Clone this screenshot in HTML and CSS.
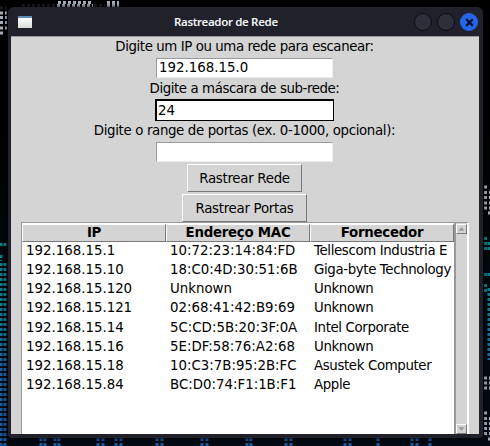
FILE: index.html
```html
<!DOCTYPE html>
<html lang="pt-BR">
<head>
<meta charset="utf-8">
<title>Rastreador de Rede</title>
<link rel="stylesheet" href="styles.css">
</head>
<body>
<svg class="wallpaper" viewBox="0 0 490 446" aria-hidden="true">
  <defs>
    <linearGradient id="tone" x1="0" y1="0" x2="0" y2="446" gradientUnits="userSpaceOnUse">
      <stop offset="0.45" stop-color="#087f80"/><stop offset="0.68" stop-color="#087b8e"/><stop offset="0.83" stop-color="#1464a5"/><stop offset="1" stop-color="#1557a0"/>
    </linearGradient>
    <linearGradient id="night" x1="0" y1="0" x2="0" y2="1">
      <stop offset="0.3" stop-color="#000"/><stop offset="0.6" stop-color="#01090c"/><stop offset="1" stop-color="#020913"/>
    </linearGradient>
  </defs>
  <rect width="490" height="446" fill="url(#night)"/>
  <g class="dots white">
    <path d="M58 2.500H92M57 5.500H93M107 2.500H119M107 5.500H119M0 13H7M0 17.500H7M0 22.500H7M0 28H7M0 33H5"/>
    <path d="M484 187H487M484 192.500H490M484 197.500H490M484 203H490M484 208H490M488 213H490M484 378H490M484 383H490M484 388H490M484 413H487M484 418.500H490M484 423.500H490M484 428.500H490M484 433.500H490M488 439H490"/>
  </g>
  <path class="dots dim" d="M22 5.500H55M0 8H7M94 5.500H105"/>
  <g class="dots" stroke="url(#tone)">
    <path d="M1 243V247M5 243V247M1 255V261M1 263V446M5 263V446"/>
    <path d="M485.500 237V252M489 242V250M485.500 273V276M489 273V276M485.500 284V292M489 288V360"/>
    <path d="M41 438V446M45 438V446M55 438V446M59 438V446M98 438V446M103 438V446M116 438V446M121 438V446M157 438V446M162 438V446M202 438V446M207 438V446M247 438V446M251 438V446M286 438V446M291 438V446M345 438V446M350 438V446M378 438V446M412 438V446M417 438V446M430 438V446"/>
  </g>
</svg>
<main class="window">
  <header class="titlebar">
    <span class="app-icon"></span>
    <h1>Rastreador de Rede</h1>
    <div class="controls"><i></i><i></i><i class="close"><svg viewBox="0 0 8 8"><path d="M1 1L7 7M7 1L1 7"/></svg></i></div>
  </header>
  <section class="client">
    <form class="form">
      <label for="ip">Digite um IP ou uma rede para escanear:</label>
      <div class="field" id="ip">192.168.15.0</div>
      <label for="mask">Digite a máscara de sub-rede:</label>
      <div class="field focused" id="mask">24</div>
      <label for="ports" class="wide">Digite o range de portas (ex. 0-1000, opcional):</label>
      <div class="field" id="ports"></div>
      <button type="button" class="net">Rastrear Rede</button>
      <button type="button" class="ports">Rastrear Portas</button>
    </form>
    <div class="tree">
      <div class="table">
        <div class="row head"><b>IP</b><b>Endereço MAC</b><b>Fornecedor</b></div>
        <div class="row"><span>192.168.15.1</span><span>10:72:23:14:84:FD</span><span>Tellescom Industria E</span></div>
        <div class="row"><span>192.168.15.10</span><span>18:C0:4D:30:51:6B</span><span>Giga-byte Technology</span></div>
        <div class="row"><span>192.168.15.120</span><span>Unknown</span><span>Unknown</span></div>
        <div class="row"><span>192.168.15.121</span><span>02:68:41:42:B9:69</span><span>Unknown</span></div>
        <div class="row"><span>192.168.15.14</span><span>5C:CD:5B:20:3F:0A</span><span>Intel Corporate</span></div>
        <div class="row"><span>192.168.15.16</span><span>5E:DF:58:76:A2:68</span><span>Unknown</span></div>
        <div class="row"><span>192.168.15.18</span><span>10:C3:7B:95:2B:FC</span><span>Asustek Computer</span></div>
        <div class="row"><span>192.168.15.84</span><span>BC:D0:74:F1:1B:F1</span><span>Apple</span></div>
      </div>
      <div class="scrollbar">
        <svg viewBox="0 0 10 8"><path d="M1.500 6L5 2L8.500 6Z"/></svg>
        <svg viewBox="0 0 10 8"><path d="M1.500 2L5 6L8.500 2Z"/></svg>
      </div>
    </div>
  </section>
</main>
</body>
</html>
```
FILE: styles.css
```css
* { box-sizing: border-box; }
body { margin: 0; width: 490px; height: 446px; overflow: hidden; background: #000; color: #000; padding: 7px 7px 8px 8px; font: 13.35px/19px "DejaVu Sans", sans-serif; }
.wallpaper { position: absolute; left: 0; top: 0; width: 490px; height: 446px; z-index: -1; }
.dots { fill: none; stroke-width: 3; stroke-dasharray: 3 2; }
.white { stroke: #a4aebb; }
.dim { stroke: #191e22; }
.window { width: 475px; height: 431px; background: #20212a; border-radius: 6px 6px 4px 4px; padding: 0 4px 4px 3px; display: flex; flex-direction: column; box-shadow: 0 0 4px #000; }
.titlebar { height: 29px; flex: none; display: flex; align-items: center; }
.app-icon { width: 14px; height: 12px; margin-left: 7px; border-top: 2px solid #5f88b6; background: linear-gradient(#fff, #d8ddd5); }
h1 { margin: 0 0 0 142px; white-space: nowrap; font: 600 11.5px/20px "Noto Sans", sans-serif; letter-spacing: -.34px; color: #f2f2f4; }
.controls { display: flex; gap: 5px; margin: 1px 1px 0 auto; }
.controls i { width: 18px; height: 18px; flex: none; border-radius: 50%; background: #2d303b; border: 1px solid #0c0d12; display: grid; place-items: center; }
.controls .close { background: #2467ee; border-color: #2467ee; }
.close svg { width: 9px; height: 9px; stroke: #07142e; stroke-width: 2; }
.client { flex: 1; min-height: 0; background: #d4d4d4; border-top: 1px solid #99999b; padding-left: 10px; padding-right: 10px; display: flex; flex-direction: column; }
.form { height: 185px; flex: none; display: flex; flex-direction: column; align-items: center; margin-right: 1px; }
label { height: 20px; line-height: 19px; white-space: nowrap; letter-spacing: -.42px; }
label.wide { letter-spacing: -.35px; }
.field { width: 177px; height: 20px; margin: 1px 0; padding-left: 2px; background: #fff; border: 1px solid; border-color: #999 #eee #eee #999; line-height: 18px; }
.focused { width: 179px; height: 22px; margin: 0; padding-left: 1px; border: 1px solid #000; border-left-width: 2px; border-top-width: 2px; line-height: 19px; }
button { font: inherit; color: #000; letter-spacing: -.28px; height: 28px; line-height: 25px; padding: 0; background: #d4d4d4; border: 1px solid; border-color: #fff #777 #777 #fff; margin-top: 1px; white-space: nowrap; }
.net { width: 115px; }
button.ports { width: 125px; margin-top: 2px; }
.tree { flex: 1; min-height: 0; display: flex; width: 448px; border: 1px solid #999; border-right-color: #fff; border-bottom: 0; background: #fff; }
.table { width: 433px; padding-top: 1px; }
.row { display: grid; grid-template-columns: repeat(3, 144px); height: 19.15px; line-height: 18.5px; }
.row span { padding-left: 4px; overflow: hidden; white-space: nowrap; }
.row span:last-child { letter-spacing: -.37px; }
.head { height: 18px; line-height: 16px; }
.head b { background: #d4d4d4; border: 1px solid; border-color: #fff #777 #777 #fff; text-align: center; letter-spacing: -.25px; }
.scrollbar { width: 14px; background: #d4d4d4; border-left: 2px solid #999; border-right: 1px solid #fff; display: flex; flex-direction: column; justify-content: space-between; padding-top: 1px; }
.scrollbar svg { width: 11px; height: 10px; fill: #999; border: 1px solid; border-color: #fff #777 #777 #fff; }
```
